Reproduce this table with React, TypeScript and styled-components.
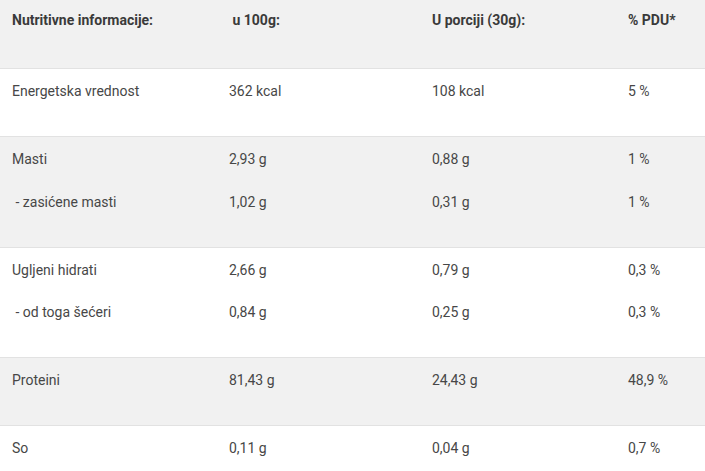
import React from "react";
import styled, { createGlobalStyle } from "styled-components";

const GlobalStyle = createGlobalStyle`
  html, body { margin: 0; padding: 0; background: #ffffff; }
  body { font-family: Roboto, "Noto Sans", Arial, sans-serif; }
`;

const Table = styled.div`
  width: 705px;
  display: flex;
  flex-direction: column;
  font-family: Roboto, "Noto Sans", Arial, sans-serif;
  font-size: 14px;
  color: #444444;
`;

const Row = styled.div<{ $shade?: boolean; $head?: boolean }>`
  display: grid;
  grid-template-columns: 217px 203px 196px 89px;
  background: ${(p) => (p.$shade ? "#f1f1f1" : "#ffffff")};
  border-bottom: 1px solid #e2e2e2;
  padding: ${(p) => (p.$head ? "10px 0 38px" : "12px 0 35px")};
  box-sizing: border-box;
`;

const Cell = styled.div`
  display: flex;
  flex-direction: column;
  gap: 22.5px;
  padding-left: 12px;
`;

const Line = styled.div<{ $bold?: boolean }>`
  line-height: 20px;
  height: 20px;
  white-space: pre;
  font-weight: ${(p) => (p.$bold ? 700 : 400)};
  color: ${(p) => (p.$bold ? "#3a3a3a" : "#474747")};
`;

type RowData = { shade: boolean; cells: string[][] };

const header = ["Nutritivne informacije:", "\u00a0u 100g:", "U porciji (30g):", "% PDU*"];

const rows: RowData[] = [
  { shade: false, cells: [["Energetska vrednost"], ["362 kcal"], ["108 kcal"], ["5 %"]] },
  {
    shade: true,
    cells: [
      ["Masti", "\u00a0- zasićene masti"],
      ["2,93 g", "1,02 g"],
      ["0,88 g", "0,31 g"],
      ["1 %", "1 %"],
    ],
  },
  {
    shade: false,
    cells: [
      ["Ugljeni hidrati", "\u00a0- od toga šećeri"],
      ["2,66 g", "0,84 g"],
      ["0,79 g", "0,25 g"],
      ["0,3 %", "0,3 %"],
    ],
  },
  { shade: true, cells: [["Proteini"], ["81,43 g"], ["24,43 g"], ["48,9 %"]] },
  { shade: false, cells: [["So"], ["0,11 g"], ["0,04 g"], ["0,7 %"]] },
];

export default function App() {
  return (
    <>
      <GlobalStyle />
      <Table>
        <Row $shade $head>
          {header.map((h, i) => (
            <Cell key={i}>
              <Line $bold>{h}</Line>
            </Cell>
          ))}
        </Row>
        {rows.map((r, ri) => (
          <Row key={ri} $shade={r.shade}>
            {r.cells.map((c, ci) => (
              <Cell key={ci}>
                {c.map((l, li) => (
                  <Line key={li}>{l}</Line>
                ))}
              </Cell>
            ))}
          </Row>
        ))}
      </Table>
    </>
  );
}
